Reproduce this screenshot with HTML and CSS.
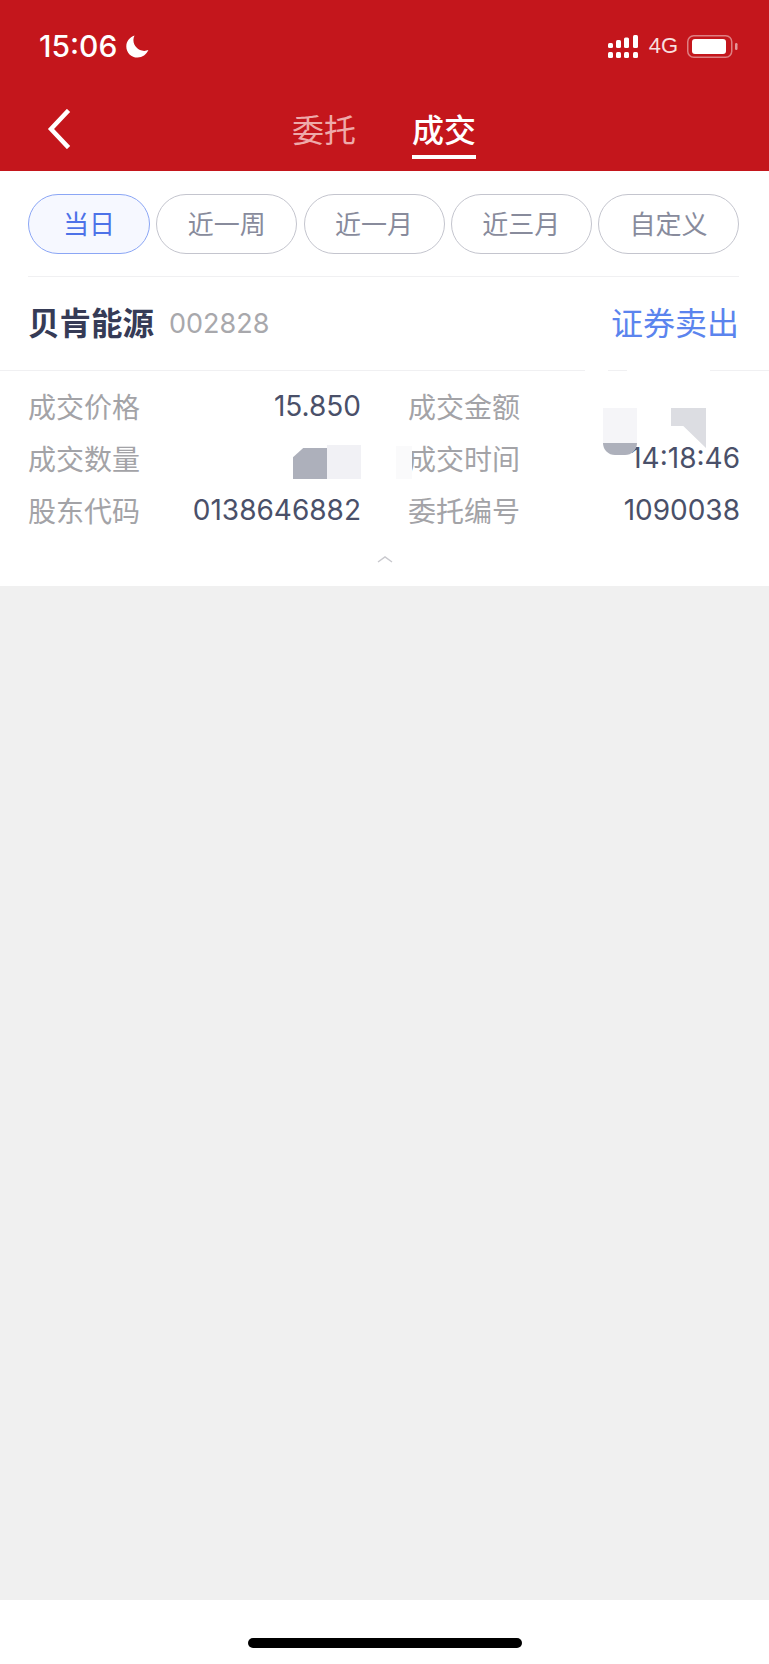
FILE: index.html
```html
<!DOCTYPE html>
<html lang="zh-CN">
<head>
  <meta charset="utf-8">
  <title>成交</title>
  <meta name="viewport" content="width=device-width, initial-scale=1.0">
  <link rel="stylesheet" href="styles.css">
</head>
<body>
  <div class="page">
    <header class="top">
      <div class="status">
        <div class="status-left">
          <span class="clock">15:06</span>
          <svg class="moon" width="23" height="23" viewBox="0 0 23 23"><path d="M8.500 0.500C3.500 2.200 0.300 6.400 0.300 11.400c0 6.200 5 11.200 11.200 11.200 4.900 0 9-3 10.900-7.500-1.300.5-2.700.8-4.200.8C12.300 15.900 7.400 11 7.400 5.100c0-1.700.4-3.200 1.100-4.600z" fill="#fff"/></svg>
        </div>
        <div class="status-right">
          <svg class="signal" width="30" height="23" viewBox="0 0 30 23" fill="#fff">
            <rect x="0" y="8" width="5" height="5" rx="1.500"/>
            <rect x="8" y="5" width="5" height="8" rx="1.500"/>
            <rect x="16" y="2.500" width="5" height="10.500" rx="1.500"/>
            <rect x="25" y="0" width="5" height="13" rx="1.500"/>
            <rect x="0" y="17" width="5" height="6" rx="1.500"/>
            <rect x="8" y="17" width="5" height="6" rx="1.500"/>
            <rect x="16" y="17" width="5" height="6" rx="1.500"/>
            <rect x="25" y="17" width="5" height="6" rx="1.500"/>
          </svg>
          <span class="net">4G</span>
          <svg class="battery" width="51" height="23" viewBox="0 0 51 23">
            <rect x="0.750" y="0.750" width="44" height="21.500" rx="6" fill="none" stroke="#fff" stroke-opacity=".45" stroke-width="1.500"/>
            <rect x="5" y="4" width="34" height="15" rx="3" fill="#fff"/>
            <rect x="48" y="8" width="2.500" height="7" rx="1.200" fill="#fff" fill-opacity=".55"/>
          </svg>
        </div>
      </div>
      <nav class="nav">
        <svg class="back" width="26" height="40" viewBox="0 0 26 40"><path d="M21 3 5 20l16 17" fill="none" stroke="#fff" stroke-width="4.500" stroke-linecap="square"/></svg>
        <div class="tabs">
          <span class="tab">委托</span>
          <span class="tab tab-on">成交</span>
        </div>
      </nav>
    </header>

    <section class="card">
      <div class="filters">
        <span class="pill pill-on">当日</span>
        <span class="pill">近一周</span>
        <span class="pill">近一月</span>
        <span class="pill">近三月</span>
        <span class="pill">自定义</span>
      </div>
      <div class="title-row">
        <div class="stock">
          <span class="stock-name">贝肯能源</span>
          <span class="stock-code">002828</span>
        </div>
        <span class="trade-type">证券卖出</span>
      </div>
      <div class="details">
        <div class="item"><span class="key">成交价格</span><span class="val">15.850</span></div>
        <div class="item"><span class="key">成交金额</span><span class="val"></span></div>
        <div class="item"><span class="key">成交数量</span><span class="val"></span></div>
        <div class="item"><span class="key">成交时间</span><span class="val">14:18:46</span></div>
        <div class="item"><span class="key">股东代码</span><span class="val">0138646882</span></div>
        <div class="item"><span class="key">委托编号</span><span class="val">1090038</span></div>
      </div>
      <div class="fold">
        <svg width="16" height="8" viewBox="0 0 16 8"><path d="M1 7l7-5 7 5" fill="none" stroke="#c9c9ce" stroke-width="1.500"/></svg>
      </div>

      <!-- redacted patches over the values -->
      <i class="patch p-gap"></i>
      <i class="patch p-gap2"></i>
      <i class="patch p-a"></i>
      <i class="patch p-b"></i>
      <i class="patch p-c"></i>
      <i class="patch p-d"></i>
      <i class="patch p-e"></i>
      <i class="patch p-f"></i>
    </section>

    <div class="blank"></div>

    <footer class="home">
      <span class="home-bar"></span>
    </footer>
  </div>
</body>
</html>
```

FILE: styles.css
```css
* {
  box-sizing: border-box;
}

html, body {
  margin: 0;
  height: 100%;
}

body {
  background-color: #f0f0f0;
  color: #3e4460;
  font-family: Inter, "Noto Sans CJK SC", sans-serif;
}

.page {
  display: flex;
  flex-direction: column;
  height: 1664px;
}

/* header */
.top {
  background-color: #c4161c;
  color: #fff;
  height: 171px;
  padding: 0 31px 0 39px;
}

.status {
  display: flex;
  justify-content: space-between;
  align-items: center;
  height: 92px;
}

.status-left, .status-right {
  display: flex;
  align-items: center;
}

.clock {
  font-family: Inter, sans-serif;
  font-weight: 500;
  font-size: 30px;
  line-height: 36px;
}

.moon {
  margin-left: 9px;
}

.net {
  font-family: "Liberation Sans", sans-serif;
  font-size: 22px;
  margin: 0 9px 0 11px;
  color: #f8dede;
}

.nav {
  display: grid;
  grid-template-columns: 1fr auto 1fr;
  align-items: center;
  height: 79px;
  margin-right: 9px;
}

.back {
  margin-left: 7px;
  margin-top: -6px;
}

.tabs {
  display: flex;
  gap: 56px;
  font-family: "Noto Sans CJK SC", sans-serif;
  font-size: 32px;
  line-height: 46px;
}

.tab {
  color: #eeaaaa;
  padding-bottom: 4px;
  border-bottom: 4px solid transparent;
}

.tab-on {
  color: #fff;
  font-weight: 500;
  border-bottom-color: #fff;
}

/* card */
.card {
  position: relative;
  background-color: #fff;
  height: 415px;
  font-family: "Noto Sans CJK SC", sans-serif;
}

.filters {
  display: flex;
  justify-content: space-between;
  margin: 0 30px 0 28px;
  padding: 23px 0 22px;
  border-bottom: 1px solid #f0f0f2;
}

.pill {
  display: flex;
  align-items: center;
  justify-content: center;
  width: 141px;
  height: 60px;
  padding-bottom: 4px;
  border: 1.500px solid #c4c5ce;
  border-radius: 30px;
  color: #888b9c;
  font-size: 26px;
}

.pill-on {
  width: 122px;
  background-color: #f6f8ff;
  border-color: #8ba6f5;
  color: #4d72e8;
}

.title-row {
  display: flex;
  justify-content: space-between;
  align-items: center;
  height: 94px;
  padding: 0 30px 5px 28px;
  border-bottom: 1px solid #f0f0f2;
}

.stock {
  display: flex;
  align-items: center;
  gap: 15px;
}

.stock-name {
  font-size: 31.500px;
  font-weight: 700;
  color: #363b56;
}

.stock-code {
  font-family: Inter, sans-serif;
  font-size: 27px;
  margin-top: 4px;
  color: #a8a8ac;
}

.trade-type {
  font-size: 32px;
  color: #5b84ee;
}

.details {
  display: grid;
  grid-template-columns: 333px 332px;
  column-gap: 47px;
  grid-auto-rows: 52px;
  padding: 9px 0 0 28px;
}

.item {
  display: flex;
  justify-content: space-between;
  align-items: center;
}

.key {
  font-size: 28px;
  color: #a3a3a7;
  white-space: nowrap;
}

.val {
  font-family: Inter, sans-serif;
  font-size: 28px;
  color: #4a5069;
  white-space: nowrap;
}

.fold {
  display: flex;
  justify-content: center;
  margin-top: 19px;
}

/* redacted spots */
.patch {
  position: absolute;
  display: block;
}

.p-gap { left: 585px; top: 199px; width: 23px; height: 3px; background: #fff; }
.p-gap2 { left: 627px; top: 199px; width: 83px; height: 3px; background: #fff; }
.p-a { left: 293px; top: 277px; width: 34px; height: 31px; background: #adb0bb; clip-path: polygon(0 30%, 30% 0, 100% 0, 100% 100%, 0 100%); }
.p-b { left: 327px; top: 274px; width: 34px; height: 34px; background: #f1f1f5; }
.p-c { left: 396px; top: 275px; width: 16px; height: 33px; background: #fafafb; }
.p-d { left: 603px; top: 237px; width: 34px; height: 36px; background: #f5f5f8; }
.p-e { left: 603px; top: 272px; width: 34px; height: 12px; background: #adb0bb; border-radius: 0 0 16px 16px; }
.p-f { left: 671px; top: 237px; width: 35px; height: 40px; background: #dcdde2; clip-path: polygon(0 0, 100% 0, 100% 100%, 35% 45%, 0 45%); }

.blank {
  flex: 1;
}

.home {
  display: flex;
  justify-content: center;
  background-color: #fff;
  height: 64px;
  padding-top: 38px;
}

.home-bar {
  display: block;
  width: 274px;
  height: 10px;
  border-radius: 5px;
  background-color: #000;
}
```
